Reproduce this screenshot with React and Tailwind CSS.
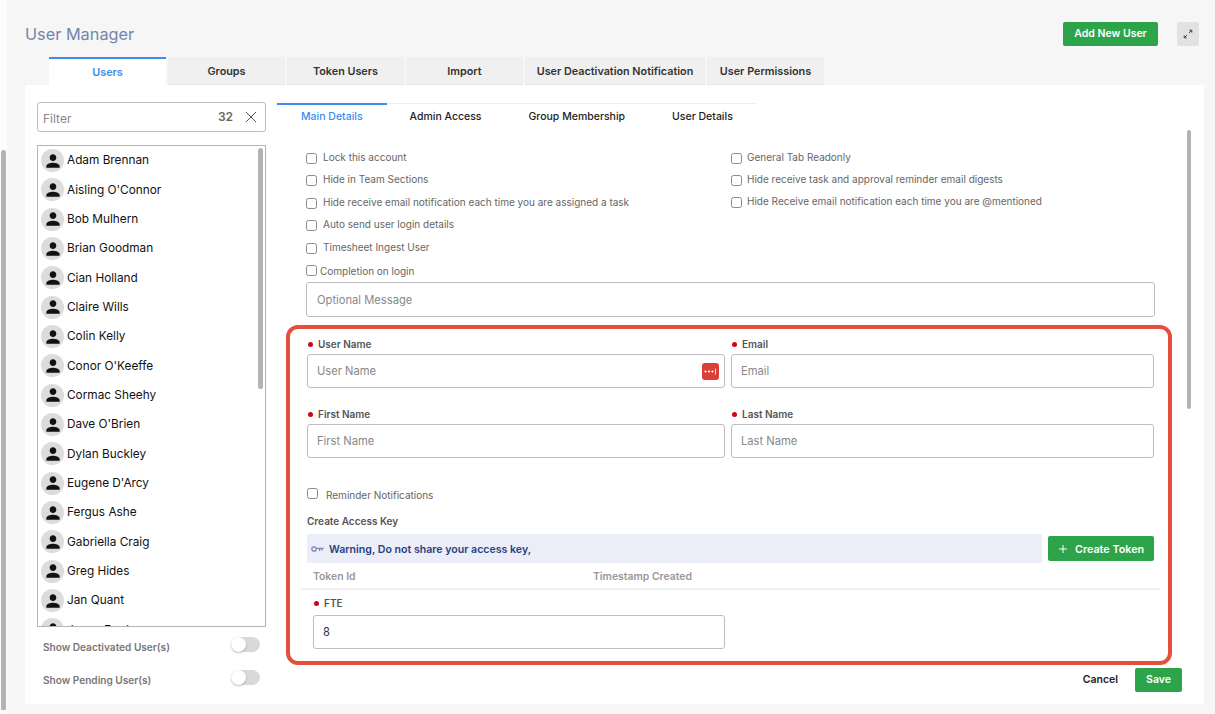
const font = { fontFamily: '"Inter", "Liberation Sans", sans-serif' };

const users = ["Adam Brennan","Aisling O'Connor","Bob Mulhern","Brian Goodman","Cian Holland","Claire Wills","Colin Kelly","Conor O'Keeffe","Cormac Sheehy","Dave O'Brien","Dylan Buckley","Eugene D'Arcy","Fergus Ashe","Gabriella Craig","Greg Hides","Jan Quant","Jason Ford"];

function Person() {
  return (
    <svg width="20" height="20" viewBox="0 0 24 24" fill="#111">
      <path d="M12 12c2.21 0 4-1.79 4-4s-1.79-4-4-4-4 1.79-4 4 1.79 4 4 4zm0 2c-2.67 0-8 1.34-8 4v2h16v-2c0-2.66-5.33-4-8-4z" />
    </svg>
  );
}

function Check({ label, box = "mr-[6px]", text = "pb-[2px]" }) {
  return (
    <label className="flex items-center h-full text-[10px] text-[#666] whitespace-nowrap">
      <input type="checkbox" className={"appearance-none w-[11px] h-[11px] shrink-0 border border-[#8a8a8a] rounded-[2.5px] bg-white " + box} />
      <span className={text}>{label}</span>
    </label>
  );
}

function Req({ label, className = "" }) {
  return (
    <div className={"flex items-center h-[14px] text-[10px] font-semibold text-[#555] " + className}>
      <span className="w-[5px] h-[5px] rounded-full bg-[#d0021b] mr-[5px] ml-[1px]" />
      {label}
    </div>
  );
}

function Field({ placeholder, value, className = "", pad = "pl-[9px]", children }) {
  return (
    <div className={"relative h-[34px] " + className}>
      <input
        defaultValue={value}
        placeholder={placeholder}
        className={pad + " w-full h-full border border-[#bdbdbd] rounded-[3px] bg-white pr-[9px] text-[11.2px] text-[#333] placeholder:text-[#888] outline-none"}
      />
      {children}
    </div>
  );
}

function Toggle({ label }) {
  return (
    <div className="flex items-center justify-between h-[33px] pl-[6px] pr-[6px]">
      <span className="text-[10.1px] font-semibold text-[#777] pt-[3px]">{label}</span>
      <span className="relative w-[29px] h-[15px] rounded-full bg-[#d9d9d9] mb-[4px]">
        <span className="absolute left-0 top-0 w-[15px] h-[15px] rounded-full bg-white shadow-[0_1px_2px_rgba(0,0,0,0.25)]" />
      </span>
    </div>
  );
}

const topTabs = [
  ["Groups", "w-[117px]"],
  ["Token Users", "w-[117px]"],
  ["Import", "w-[117px]"],
  ["User Deactivation Notification", "w-[180px]"],
  ["User Permissions", "w-[117px]"],
];

export default function App() {
  return (
    <div style={font} className="flex w-[1215px] h-[714px] overflow-hidden bg-[#f6f6f6]">
      {/* page scrollbar */}
      <div className="w-[7px] shrink-0 bg-[#fcfcfc] pl-[1px] pt-[150px] pb-[4px]">
        <div className="w-[5px] h-full rounded-t-[3px] bg-[#b3b3b3]" />
      </div>

      <div className="w-[1179px] ml-[18px] flex flex-col">
        {/* header */}
        <div className="flex h-[57px] pt-[22px] items-start">
          <div className="flex-1 h-[24px] leading-[24px] text-[16.3px] text-[#7186ab]">User Manager</div>
          <button className="w-[95px] h-[24px] rounded-[2px] bg-[#2ea44a] text-white text-[10.5px] font-semibold">Add New User</button>
          <button className="w-[22px] h-[24px] ml-[19px] mr-[5px] rounded-[2px] bg-[#e2e2e2] flex items-center justify-center">
            <svg width="10" height="10" viewBox="0 0 10 10" fill="none" stroke="#333" strokeWidth="0.9">
              <path d="M6 4 8.6 1.4M6.4 1.2H8.8V3.6M4 6 1.4 8.6M1.2 6.4V8.8H3.6" />
            </svg>
          </button>
        </div>

        {/* top tabs */}
        <div className="flex h-[28px] pl-[24px] gap-[2px]">
          <div className="w-[117px] border-t-2 border-[#3c8dee] bg-white flex items-center justify-center pt-[3px] text-[10.8px] font-semibold text-[#3c8dee]">Users</div>
          {topTabs.map(([t, w]) => (
            <div key={t} className={w + " bg-[#f0f0f0] border-b border-[#e6e6e6] flex items-center justify-center pt-[4px] text-[10.8px] font-semibold text-[#333]"}>{t}</div>
          ))}
        </div>

        {/* panel */}
        <div className="flex w-full h-[619px] bg-white">
          {/* left column */}
          <div className="w-[241px] shrink-0 pl-[12px] pt-[17px]">
            <div className="flex items-center h-[30px] border border-[#bdbdbd] rounded-[3px] pl-[5px] pr-[8px]">
              <span className="flex-1 text-[12px] text-[#888] pt-[3px]">Filter</span>
              <span className="text-[12px] font-semibold text-[#666] mr-[12px] pb-[1px]">32</span>
              <svg width="12" height="12" viewBox="0 0 12 12" stroke="#555" strokeWidth="1" fill="none" className="mb-[1px]">
                <path d="M1 1 11 11M11 1 1 11" />
              </svg>
            </div>
            <div className="relative h-[482px] mt-[13px] border border-[#b5b5b5] overflow-hidden">
              {users.map((u) => (
                <div key={u} className="flex items-center h-[29.33px] pl-[3px]">
                  <span className="w-[23px] h-[23px] rounded-full bg-[#dcdcdc] flex items-center justify-center shrink-0">
                    <Person />
                  </span>
                  <span className="ml-[3px] pt-[1px] text-[11.8px] text-[#111]">{u}</span>
                </div>
              ))}
              <div className="absolute right-[2px] top-[2px] w-[5px] h-[241px] rounded-[3px] bg-[#b3b3b3]" />
            </div>
            <div className="mt-[3px]">
              <Toggle label="Show Deactivated User(s)" />
              <Toggle label="Show Pending User(s)" />
            </div>
          </div>

          {/* right column */}
          <div className="relative flex-1 pt-[18px] pl-[11px]">
            <div className="flex w-[480px] h-[25px] border-t border-[#eeeeee] text-[10.5px] font-medium text-[#222] whitespace-nowrap">
              <div className="px-[24px] -mt-[1px] pt-[1px] border-t-2 border-[#3c8dee] text-[#3c8dee] flex items-center">Main Details</div>
              <div className="px-[23px] pt-[2px] flex items-center">Admin Access</div>
              <div className="px-[24px] pt-[2px] flex items-center">Group Membership</div>
              <div className="px-[23px] pt-[2px] flex items-center">User Details</div>
            </div>

            <div className="absolute left-[921px] top-[45px] w-[4px] h-[279px] rounded-[2px] bg-[#b3b3b3]" />

            <div className="ml-[29px] w-[849px] mt-[19px]">
              <div className="grid grid-cols-[425px_1fr]">
                <div className="flex flex-col">
                  <div className="h-[22.5px]"><Check label="Lock this account" /></div>
                  <div className="h-[22.5px]"><Check label="Hide in Team Sections" /></div>
                  <div className="h-[22.5px]"><Check label="Hide receive email notification each time you are assigned a task" /></div>
                  <div className="h-[22.5px]"><Check label="Auto send user login details" /></div>
                  <div className="h-[22.5px]"><Check label="Timesheet Ingest User" /></div>
                  <div className="h-[22.5px]"><Check label="Completion on login" box="mr-[3px]" text="pt-[1px]" /></div>
                </div>
                <div className="flex flex-col">
                  <div className="h-[22px]"><Check label="General Tab Readonly" box="mr-[5px]" /></div>
                  <div className="h-[22px]"><Check label="Hide receive task and approval reminder email digests" box="mr-[5px]" /></div>
                  <div className="h-[22px]"><Check label="Hide Receive email notification each time you are @mentioned" box="mr-[5px]" /></div>
                </div>
              </div>
              <Field placeholder="Optional Message" className="h-[35px]" pad="pl-[10px]" />
            </div>

            {/* highlighted section */}
            <div className="ml-[9px] mt-[8px] w-[886px] h-[340px] border-[4px] border-[#e5503c] rounded-[12px] pl-[17px] pr-[14px] pt-[8px]">
              <div className="grid grid-cols-[418px_423px] gap-x-[6px]">
                <div>
                  <Req label="User Name" />
                  <Field placeholder="User Name" className="mt-[3px]">
                    <span className="absolute right-[6px] top-[9px] w-[17px] h-[17px] rounded-[3px] bg-[#dc3f3a] flex items-center justify-center">
                      <svg width="15" height="7" viewBox="0 0 15 7" fill="#fff">
                        <circle cx="2.5" cy="3.5" r="1.1" />
                        <circle cx="6" cy="3.5" r="1.1" />
                        <circle cx="9.5" cy="3.5" r="1.1" />
                        <rect x="12.2" y="0.5" width="0.8" height="6" />
                      </svg>
                    </span>
                  </Field>
                </div>
                <div>
                  <Req label="Email" />
                  <Field placeholder="Email" className="mt-[3px]" />
                </div>
                <div className="mt-[19px]">
                  <Req label="First Name" />
                  <Field placeholder="First Name" className="mt-[3px]" />
                </div>
                <div className="mt-[19px]">
                  <Req label="Last Name" />
                  <Field placeholder="Last Name" className="mt-[3px]" />
                </div>
              </div>

              <div className="h-[14px] mt-[30px]"><Check label="Reminder Notifications" box="mr-[8px] -mt-[4px]" text="" /></div>
              <div className="h-[14px] mt-[12px] flex items-center text-[10px] font-semibold text-[#555]">Create Access Key</div>

              <div className="flex items-center mt-[6px] h-[29px]">
                <div className="flex items-center w-[736px] h-[29px] rounded-[2px] bg-[#ebeef8] pl-[4px]">
                  <svg width="13" height="8" viewBox="0 0 13 8" fill="none" stroke="#7a87b5" strokeWidth="1.3">
                    <circle cx="3" cy="4" r="2.2" />
                    <path d="M5.2 3.4H12.6M8.6 3.4V6M11 3.4V5.4" />
                  </svg>
                  <span className="ml-[5px] pt-[2px] text-[10.6px] font-semibold text-[#2a3f7e]">Warning, Do not share your access key,</span>
                </div>
                <button className="flex items-center justify-center w-[106px] h-[25px] ml-[6px] rounded-[2px] bg-[#2ea44a] text-white text-[10.8px] font-semibold">
                  <svg width="10" height="10" viewBox="0 0 10 10" stroke="#fff" strokeWidth="1" className="mr-[7px]">
                    <path d="M5 1V9M1 5H9" />
                  </svg>
                  <span className="pt-[3px]">Create Token</span>
                </button>
              </div>

              <div className="flex items-center -ml-[6px] w-[859px] h-[27px] border-b-2 border-[#efefef] pl-[12px] pt-[2px] text-[10.4px] font-semibold text-[#999]">
                <span className="w-[280px]">Token Id</span>
                <span>Timestamp Created</span>
              </div>

              <div className="ml-[6px] w-[412px]">
                <Req label="FTE" className="mt-[6px]" />
                <Field value="8" className="mt-[5px]" />
              </div>
            </div>

            {/* footer */}
            <div className="flex items-center justify-end h-[24px] mt-[3px] mr-[22px]">
              <button className="text-[10.5px] font-semibold text-[#222] mr-[17px]">Cancel</button>
              <button className="w-[47px] h-[24px] rounded-[2px] bg-[#2ea44a] text-white text-[10.5px] font-semibold">Save</button>
            </div>
          </div>
        </div>
      </div>
    </div>
  );
}
